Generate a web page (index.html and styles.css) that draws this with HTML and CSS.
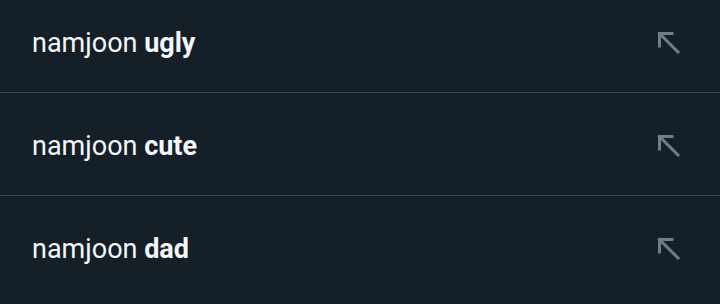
FILE: index.html
```html
<!DOCTYPE html>
<html lang="en">
<head>
    <meta charset="UTF-8">
    <meta name="viewport" content="width=device-width, initial-scale=1.0">
    <title>Search suggestions</title>
    <link rel="stylesheet" href="styles.css">
</head>
<body>
    <ul class="suggestions">
        <li class="suggestion">
            <span class="query">namjoon <b>ugly</b></span>
            <svg class="fill-in" viewBox="0 0 26 26" width="26" height="26">
                <path d="M3.5 3.5 L22 22 M3.5 3.5 H16 M3.5 3.5 V16" />
            </svg>
        </li>
        <li class="suggestion">
            <span class="query">namjoon <b>cute</b></span>
            <svg class="fill-in" viewBox="0 0 26 26" width="26" height="26">
                <path d="M3.5 3.5 L22 22 M3.5 3.5 H16 M3.5 3.5 V16" />
            </svg>
        </li>
        <li class="suggestion">
            <span class="query">namjoon <b>dad</b></span>
            <svg class="fill-in" viewBox="0 0 26 26" width="26" height="26">
                <path d="M3.5 3.5 L22 22 M3.5 3.5 H16 M3.5 3.5 V16" />
            </svg>
        </li>
    </ul>
</body>
</html>
```

FILE: styles.css
```css
body {
    margin: 0;
    padding: 0;
    background-color: #151f28;
    font-family: Roboto, "Liberation Sans", sans-serif;
    overflow: hidden;
}

.suggestions {
    list-style: none;
    margin: -10px 0 0 0;
    padding: 0;
}

.suggestion {
    height: 103px;
    box-sizing: border-box;
    display: flex;
    align-items: center;
    justify-content: space-between;
    padding: 3px 38px 0 32px;
    border-bottom: 1px solid #3a4650;
}

.suggestion:last-child {
    border-bottom: none;
}

.query {
    color: #f4f6f8;
    font-size: 27px;
}

.query b {
    font-weight: bold;
}

.fill-in path {
    fill: none;
    stroke: #6d7e8c;
    stroke-width: 3;
    stroke-linecap: square;
}
```
